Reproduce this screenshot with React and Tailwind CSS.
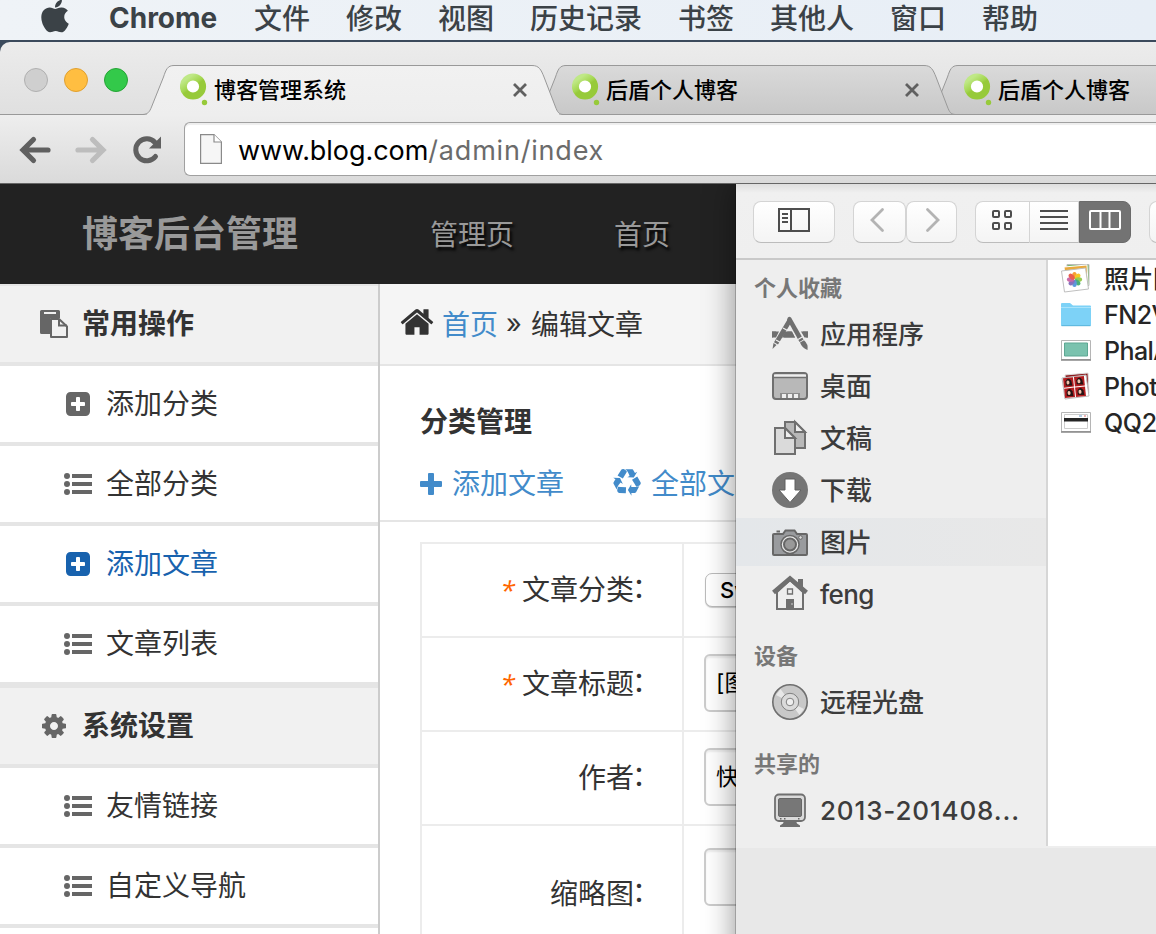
import React from "react";
import { FaApple } from "react-icons/fa";

const MENUS = ["文件", "修改", "视图", "历史记录", "书签", "其他人", "窗口", "帮助"];

function Favicon() {
  return (
    <svg width="28" height="34" viewBox="0 0 28 34" className="shrink-0">
      <defs>
        <linearGradient id="fav" x1="0" y1="0" x2="0.7" y2="1">
          <stop offset="0.15" stopColor="#bfe886" />
          <stop offset="0.5" stopColor="#a3d64f" />
          <stop offset="0.6" stopColor="#97ca3a" />
        </linearGradient>
      </defs>
      <circle cx="13" cy="13.5" r="9.6" fill="#fff" stroke="url(#fav)" strokeWidth="7" />
      <circle cx="24.5" cy="29.5" r="2.7" fill="#97ca3a" />
    </svg>
  );
}

function TabShape({ active }) {
  return (
    <svg width="420" height="51" viewBox="0 0 420 51" className="absolute -left-[3px] top-0">
      <defs>
        <linearGradient id="tabOn" x1="0" y1="0" x2="0" y2="1">
          <stop offset="0" stopColor="#f1f1f1" />
          <stop offset="1" stopColor="#eeeeee" />
        </linearGradient>
        <linearGradient id="tabOff" x1="0" y1="0" x2="0" y2="1">
          <stop offset="0" stopColor="#dadada" />
          <stop offset="1" stopColor="#c8c8c8" />
        </linearGradient>
      </defs>
      <path
        d="M0 49.500 C5 49 6.500 47 8.500 42 L20.500 12 C23 4.500 24.500 0.500 31 0.500 L389 0.500 C396 0.500 398 4.500 401 12 L412.500 42 C414.500 47 415.500 49 420 49.500"
        fill={active ? "url(#tabOn)" : "url(#tabOff)"}
        stroke="#999"
      />
      {active ? <path d="M4 49H416V51H4z" fill="#eeeeee" /> : <path d="M0 49.500H420" stroke="#999" />}
    </svg>
  );
}

function Tab({ title, active, z, closable = true }) {
  return (
    <div className={`relative h-[50px] w-[392px] shrink-0 ${z}`}>
      <TabShape active={active} />
      <div className="relative flex h-full items-center pl-[34px]">
        <Favicon />
        <span className="ml-[6px] w-[298px] text-[22px] font-medium leading-[32px] text-black">{title}</span>
        {closable && (
          <svg width="16" height="16" viewBox="0 0 16 16" className="shrink-0" stroke="#606060" strokeWidth="2.800">
            <path d="M2 2l12 12M14 2L2 14" />
          </svg>
        )}
      </div>
    </div>
  );
}

function ChromeTop() {
  return (
    <div className="flex h-[142px] shrink-0 flex-col rounded-tl-[10px] bg-gradient-to-b from-[#ececec] via-[#e0e0e0] via-50% to-[#dcdcdc]">
      <div className="flex h-[73px] items-end border-b border-[#999]">
        <div className="flex h-full w-[146px] shrink-0 gap-4 pl-6 pt-[26px]">
          <i className="h-6 w-6 rounded-full border border-[#b0b0b0] bg-[#cfcfcf]" />
          <i className="h-6 w-6 rounded-full border border-[#e0a030] bg-[#ffbe41]" />
          <i className="h-6 w-6 rounded-full border border-[#25a435] bg-[#33c94a]" />
        </div>
        <div className="-mb-px flex h-[50px]">
          <Tab title="博客管理系统" active z="z-30" />
          <Tab title="后盾个人博客" z="z-20" />
          <Tab title="后盾个人博客" z="z-10" closable={false} />
        </div>
      </div>
      <div className="flex h-[69px] items-center border-b border-[#666] bg-gradient-to-b from-[#eeeeee] to-[#dadada]">
        <svg width="184" height="60" viewBox="0 0 184 60" fill="none" strokeLinecap="round" className="shrink-0">
          <path d="M23.500 31H48M33.500 20.500L23 31l10.500 10.500" stroke="#606060" strokeWidth="5.200" />
          <path d="M78 31h24M92.500 20.500L103 31l-10.500 10.500" stroke="#bdbdbd" strokeWidth="5.200" />
          <path d="M155.500 37.500A11 11 0 1 1 155 23.500" stroke="#606060" strokeWidth="5" />
          <path d="M161 17.500V29.500H149z" fill="#606060" />
        </svg>
        <div className="flex h-[54px] flex-1 items-center rounded-l-[6px] border border-r-0 border-[#a0a0a0] bg-white pl-[15px] shadow-[inset_0_2px_1px_#eee]">
          <svg width="22" height="30" viewBox="0 0 22 30" fill="#f6f6f6" stroke="#8a8a8a" strokeWidth="1.200" className="shrink-0">
            <path d="M.6.6H14L21.400 8V29.400H.6z" />
            <path d="M14 .6V8H21.400" fill="#fff" />
          </svg>
          <span className="ml-4 whitespace-nowrap pt-[3px] text-[27px] leading-[36px] tracking-[-0.050px] text-black">
            www.blog.com<span className="tracking-[0.800px] text-[#6b6b6b]">/admin/index</span>
          </span>
        </div>
      </div>
    </div>
  );
}

function PasteIcon() {
  return (
    <svg width="28" height="28" viewBox="0 0 28 28" className="shrink-0">
      <path d="M1.500 0H18.500Q20 0 20 1.500V8H12Q10 8 10 10V24H1.500Q0 24 0 22.500V1.500Q0 0 1.500 0z" fill="#666" />
      <path d="M4 2H16V4H4z" fill="#f1f1f1" />
      <path d="M11 9H19L27 16.500V27H11z" fill="#f1f1f1" stroke="#666" strokeWidth="2" strokeLinejoin="round" />
      <path d="M19 9V15.500H27" fill="none" stroke="#666" strokeWidth="2" />
    </svg>
  );
}

function CogIcon() {
  return (
    <svg width="28" height="28" viewBox="0 0 1792 1792" fill="#666" className="shrink-0">
      <path d="M1152 896q0-106-75-181t-181-75-181 75-75 181 75 181 181 75 181-75 75-181zm512-109v222q0 12-8 23t-20 13l-185 28q-19 54-39 91 35 50 107 138 10 12 10 25t-9 23q-27 37-99 108t-94 71q-12 0-26-9l-138-108q-44 23-91 38-16 136-29 186-7 28-36 28h-222q-14 0-24.500-8.500t-11.500-21.500l-28-184q-49-16-90-37l-141 107q-10 9-25 9-14 0-25-11-126-114-165-168-7-10-7-23 0-12 8-23 15-21 51-66.500t54-70.500q-27-50-41-99l-183-27q-13-2-21-12.500t-8-23.500v-222q0-12 8-23t19-13l186-28q14-46 39-92-40-57-107-138-10-12-10-24 0-10 9-23 26-36 98.500-107.500t94.500-71.500q13 0 26 10l138 107q44-23 91-38 16-136 29-186 7-28 36-28h222q14 0 24.500 8.500t11.500 21.500l28 184q49 16 90 37l142-107q9-9 24-9 13 0 25 10 129 119 165 170 7 8 7 22 0 12-8 23-15 21-51 66.500t-54 70.500q26 50 41 98l183 28q13 2 21 12.500t8 23.500z" />
    </svg>
  );
}

function PlusSquare() {
  return (
    <svg width="28" height="28" viewBox="0 0 1792 1792" fill="currentColor" className="shrink-0">
      <path d="M1344 960v-128q0-26-19-45t-45-19h-256v-256q0-26-19-45t-45-19h-128q-26 0-45 19t-19 45v256h-256q-26 0-45 19t-19 45v128q0 26 19 45t45 19h256v256q0 26 19 45t45 19h128q26 0 45-19t19-45v-256h256q26 0 45-19t19-45zm320-544v960q0 119-84.500 203.500t-203.500 84.500h-960q-119 0-203.500-84.500t-84.500-203.500v-960q0-119 84.500-203.500t203.500-84.500h960q119 0 203.500 84.500t84.500 203.500z" />
    </svg>
  );
}

function ListIcon() {
  return (
    <svg width="28" height="28" viewBox="0 0 28 28" fill="currentColor" className="shrink-0">
      <circle cx="3" cy="6" r="3" />
      <circle cx="3" cy="14" r="3" />
      <circle cx="3" cy="22" r="3" />
      <path d="M8 4h20v4H8zM8 12h20v4H8zM8 20h20v4H8z" />
    </svg>
  );
}

function HomeIcon() {
  return (
    <svg width="36" height="36" viewBox="0 0 1792 1792" fill="#333" className="mb-[5px] shrink-0">
      <path d="M1472 992v480q0 26-19 45t-45 19h-384v-384h-256v384h-384q-26 0-45-19t-19-45v-480q0-1 .5-3t.5-3l575-474 575 474q1 2 1 6zm223-69l-62 74q-8 9-21 11h-3q-13 0-21-7l-692-577-692 577q-12 8-24 7-13-2-21-11l-62-74q-8-10-7-23.500t11-21.500l719-599q32-26 76-26t76 26l244 204v-195q0-14 9-23t23-9h192q14 0 23 9t9 23v408l219 182q10 8 11 21.500t-7 23.500z" />
    </svg>
  );
}

function RecycleIcon() {
  return (
    <svg width="28" height="28" viewBox="0 0 1792 1792" fill="currentColor" className="mb-[2px] ml-[49px] shrink-0">
      <path d="M836 1169l-15 368-2 22-420-29q-36-3-67-31.500t-47-65.500q-11-27-14.500-55t4-65 12-55 21.500-64 19-53q78 12 509 28zm-387-586l180 379-147-92q-63 72-111.500 144.500t-72.500 125-39.500 94.500-18.500 63l-4 21-190-357q-17-26-18-56t6-47l8-18q35-63 114-188l-140-86zm1231 517l-188 359q-12 29-36.500 46.500t-43.500 20.500l-18 4q-71 7-219 12l8 164-230-367 211-362 7 173q170 16 283 5t170-33zm-785-924q-47 63-265 435l-317-187-19-12 225-356q20-31 60-45t80-10q24 2 48.500 12t42 21 41.500 33 36 34.500 36 39.500 32 35zm655 307l212 363q18 37 12.500 76t-27.500 74q-13 20-33 37t-38 28-48.500 22-47 16-51.500 14-46 12q-34-72-265-436l313-195zm-143-226l142-83-220 373-419-20 151-86q-34-89-75-166t-75.500-123.500-64.500-80-47-46.500l-17-13 405 1q31-3 58 10.500t39 28.500l11 15q39 61 112 190z" />
    </svg>
  );
}

function SideHeader({ icon, children }) {
  return (
    <div className="flex h-[80px] shrink-0 items-center border-b-4 border-[#e5e5e5] bg-[#f1f1f1] pl-10 text-[28px] font-bold text-[#333]">
      {icon}
      <span className="ml-[14px]">{children}</span>
    </div>
  );
}

function SideItem({ plus, active, children }) {
  return (
    <div className="flex h-[80px] shrink-0 items-center border-b-4 border-[#e5e5e5] bg-white pl-16">
      <span className={active ? "text-[#1862ae]" : "text-[#666]"}>{plus ? <PlusSquare /> : <ListIcon />}</span>
      <span className={`ml-[14px] text-[28px] ${active ? "text-[#1862ae]" : "text-[#333]"}`}>{children}</span>
    </div>
  );
}

function FormRow({ label, required, height = "h-[94px]", fieldPad = "pt-4", children }) {
  return (
    <div className={`flex border-t-2 border-[#ececec] ${height}`}>
      <div className="flex w-[262px] shrink-0 items-center justify-end border-r-2 border-[#ececec] pr-[20px] text-[28px] text-[#333]">
        {required && (
          <span className="mr-[7px] inline-block -skew-x-12 font-['Open_Sans',sans-serif] text-[26px] text-[#ff6600]">*</span>
        )}
        <span className="whitespace-nowrap">
          {label}
          <span className="relative -left-[2px] -top-[2px]">：</span>
        </span>
      </div>
      <div className={`flex flex-1 items-start pl-5 ${fieldPad}`}>{children}</div>
    </div>
  );
}

function Field({ children }) {
  return (
    <div className="flex h-[58px] w-[500px] items-center rounded-[6px] border-2 border-[#ccc] bg-white pl-[10px] text-[23px] text-black shadow-[inset_0_2px_2px_#eee]">
      {children}
    </div>
  );
}

function BlogPage() {
  return (
    <div className="flex h-[750px] w-full flex-col overflow-hidden bg-white">
      <div className="flex h-[100px] shrink-0 items-center bg-[#222] pl-[82px] text-[#999]">
        <span className="w-[348px] text-[36px] font-bold">博客后台管理</span>
        <span className="w-[184px] pt-px text-[28px] [text-shadow:2px_3px_3px_#000]">管理页</span>
        <span className="pt-px text-[28px] [text-shadow:2px_3px_3px_#000]">首页</span>
      </div>
      <div className="flex h-[650px]">
        <div className="flex w-[380px] shrink-0 flex-col border-r-2 border-[#ccc]">
          <div className="h-[2px] shrink-0 bg-[#e5e5e5]" />
          <SideHeader icon={<PasteIcon />}>常用操作</SideHeader>
          <SideItem plus>添加分类</SideItem>
          <SideItem>全部分类</SideItem>
          <SideItem plus active>添加文章</SideItem>
          <SideItem>文章列表</SideItem>
          <div className="h-[2px] shrink-0 bg-[#e5e5e5]" />
          <SideHeader icon={<CogIcon />}>系统设置</SideHeader>
          <SideItem>友情链接</SideItem>
          <SideItem>自定义导航</SideItem>
        </div>
        <div className="flex flex-1 flex-col">
          <div className="flex h-[82px] shrink-0 items-center border-b-2 border-[#e5e5e5] bg-[#f5f5f5] pl-[19px] text-[28px] text-[#333]">
            <HomeIcon />
            <span className="ml-[7px] pt-px text-[#428bca]">首页</span>
            <span className="ml-[8px] w-[25px] pt-px text-[27px]">»</span>
            <span className="pt-px">编辑文章</span>
          </div>
          <div className="flex h-[156px] shrink-0 flex-col border-b-2 border-[#e5e5e5] pl-10 pt-[35px]">
            <span className="text-[28px] font-bold leading-[42px] text-[#333]">分类管理</span>
            <div className="mt-[20px] flex items-center whitespace-nowrap text-[28px] leading-[42px] text-[#428bca]">
              <svg width="22" height="22" viewBox="0 0 22 22" fill="currentColor">
                <path d="M9 0h4q1 0 1 1v7h7q1 0 1 1v4q0 1-1 1h-7v7q0 1-1 1H9q-1 0-1-1v-7H1q-1 0-1-1V9q0-1 1-1h7V1q0-1 1-1z" />
              </svg>
              <span className="ml-[10px]">添加文章</span>
              <RecycleIcon />
              <span className="ml-[10px]">全部文章</span>
            </div>
          </div>
          <div className="ml-10 mt-5 border-l-2 border-[#ececec]">
            <FormRow label="文章分类" required fieldPad="pt-[29px]">
              <div className="ml-px flex h-[34px] w-[200px] items-center rounded-[7px] border border-[#bbb] bg-white pl-[14px] text-[22px] font-medium text-black shadow-[0_1px_1px_#ccc]">
                Sw
              </div>
            </FormRow>
            <FormRow label="文章标题" required>
              <Field>[图</Field>
            </FormRow>
            <FormRow label="作者">
              <Field>快</Field>
            </FormRow>
            <FormRow label="缩略图" height="h-[138px]" fieldPad="pt-[22px]">
              <Field />
            </FormRow>
          </div>
        </div>
      </div>
    </div>
  );
}

const I = "h-10 w-10 shrink-0";
const finderIcons = {
  apps: (
    <svg viewBox="0 0 40 40" className={I} fill="#6f6f6f">
      <path d="M2 17.500h36v6H2z" />
      <path d="M19.500 3L5 30 M20 4L34 30" stroke="#eee" strokeWidth="10" />
      <path d="M2.500 35l1-6 3 2zM21.500 8L8 30.500 4 28.200 17.500 5.500z" />
      <path d="M17 5.500Q18 1.500 21 3.500L33.500 25.500 29.500 28z" />
      <path d="M30 28.500l4-2.300Q38.500 30 37.500 36 32 34 30 28.500z" />
      <path d="M2 17.500h7l-3 6H2zM31 17.500h7v6h-3.500z" />
      <path d="M13 14l4.500 2.500M28 25.500l5-3M6 26l4.500 2.500" stroke="#eee" strokeWidth="1.300" />
      <path d="M15 17.500h7l3 6H12z" />
    </svg>
  ),
  desktop: (
    <svg viewBox="0 0 40 40" className={I}>
      <rect x="3" y="7" width="34" height="26" rx="3" fill="#b8b8b8" stroke="#6f6f6f" strokeWidth="2" />
      <path d="M4 8.500h32v2.500H4z" fill="#eee" />
      <path d="M3 11.500h34" stroke="#6f6f6f" strokeWidth="1.500" />
      <path d="M10 27h20v5H10z" fill="#8c8c8c" />
      <path d="M12 28h4v4h-4zM18 28h4v4h-4zM24 28h4v4h-4z" fill="#eee" />
    </svg>
  ),
  docs: (
    <svg viewBox="0 0 40 40" className={I} stroke="#6f6f6f" strokeWidth="2">
      <path d="M15 4H25L35 14V30H15z" fill="#b8b8b8" />
      <path d="M25 4V14H35z" fill="#eee" />
      <path d="M5 10H15L25 20V36H5z" fill="#dadada" />
      <path d="M15 10V20H25z" fill="#eee" />
    </svg>
  ),
  downloads: (
    <svg viewBox="0 0 40 40" className={I}>
      <circle cx="20" cy="20" r="18" fill="#757575" />
      <path d="M15 9h10v11H31L20 32.500 9 20h6z" fill="#fff" stroke="#606060" strokeWidth="1" />
    </svg>
  ),
  pictures: (
    <svg viewBox="0 0 40 40" className={I}>
      <path d="M4 9h9l2.500-3.500h9L27 9h9q1 0 1 1v19q0 1-1 1H4q-1 0-1-1V10q0-1 1-1z" transform="translate(0 3)" fill="#999b9e" stroke="#676767" strokeWidth="2" />
      <path d="M6.500 9.500h3.500" stroke="#676767" strokeWidth="2" />
      <circle cx="20" cy="22.500" r="9" fill="#e8e8e8" stroke="#676767" strokeWidth="1.500" />
      <circle cx="20" cy="22.500" r="6" fill="#999" stroke="#676767" strokeWidth="2" />
      <circle cx="30.500" cy="15.500" r="1.800" fill="#ddd" stroke="#676767" />
    </svg>
  ),
  home: (
    <svg viewBox="0 0 40 40" className={I}>
      <path d="M7 18V35H33V18L20 6z" fill="#eee" stroke="#6f6f6f" strokeWidth="2" />
      <path d="M28 5h5v11l-5-4z" fill="#6f6f6f" />
      <path d="M3.500 18.500L20 4.500l16.500 14" fill="none" stroke="#6f6f6f" strokeWidth="4.500" />
      <path d="M16 25h8v11h-8z" fill="#6f6f6f" />
      <path d="M17.500 15h5v5h-5z" fill="#eee" stroke="#6f6f6f" strokeWidth="1.300" />
      <path d="M22 29v2" stroke="#ccc" />
    </svg>
  ),
  disc: (
    <svg viewBox="0 0 40 40" className={I}>
      <circle cx="20" cy="20" r="17.200" fill="#c8c8c8" stroke="#6f6f6f" strokeWidth="1.600" />
      <path d="M20 20L6 13 10.500 7zM20 20l14 7-4.500 6z" fill="#e8e8e8" />
      <circle cx="20" cy="20" r="8.700" fill="#dadada" stroke="#808080" />
      <circle cx="20" cy="20" r="3.800" fill="#eee" stroke="#808080" />
    </svg>
  ),
  pc: (
    <svg viewBox="0 0 40 40" className={I}>
      <path d="M14 31h12l1 2.500 3 2v1.500H10v-1.500l3-2z" fill="#6f6f6f" />
      <rect x="5" y="4.500" width="30" height="26.500" rx="4" fill="#dadada" stroke="#6f6f6f" strokeWidth="1.800" />
      <rect x="8.500" y="8.500" width="23" height="18" rx="1.500" fill="#777" stroke="#666" />
      <path d="M10 28.700h1.500M14 28.700h1.500M28 28.700h1.500" stroke="#666" strokeWidth="1.500" />
    </svg>
  ),
};

function FinderItem({ icon, selected, track = "", children }) {
  return (
    <div
      className={`mb-1 flex h-12 shrink-0 items-center pl-[34px] text-[26px] font-medium text-[#3c3c3c] ${
        selected ? "bg-gradient-to-r from-[#e4e7ea] to-[#e8e8e8]" : ""
      }`}
    >
      {finderIcons[icon]}
      <span className={`ml-[10px] whitespace-nowrap ${track}`}>{children}</span>
    </div>
  );
}

function FinderHead({ children, className }) {
  return <div className={`shrink-0 pl-[18px] text-[22px] font-bold leading-[32px] text-[#777] ${className}`}>{children}</div>;
}

const BTN = "flex h-[42px] items-center justify-center border border-[#d4d4d4] border-b-[#bcbcbc] bg-gradient-to-b from-white to-[#f4f4f4] pb-1";
const petals = ["#f7941d", "#f4c20d", "#8dc63f", "#39a86b", "#4a90d9", "#7b62b5", "#c45aa0", "#e84c3d"];

const files = [
  {
    name: "照片图",
    size: "text-[25px] tracking-[-0.500px]",
    icon: (
      <>
        <path d="M7 1.500h22v21H7z" fill="#7cb96a" stroke="#bbb" />
        <path d="M4 4l23-2 1 20-22 2z" fill="#e9a93c" stroke="#fff" />
        <path d="M1.500 8l24-3 3 21-24 3z" fill="#fff" stroke="#c0c0c0" />
        <g transform="translate(14.500 16.500)" opacity=".9">
          {petals.map((c, i) => (
            <ellipse key={c} cx="0" cy="-4" rx="2.300" ry="3.600" fill={c} transform={`rotate(${i * 45})`} />
          ))}
        </g>
      </>
    ),
  },
  {
    name: "FN2V",
    size: "text-[25px] tracking-[-0.500px]",
    icon: (
      <>
        <path d="M1 5q0-1 1-1h8l3 2.500h17q1 0 1 1V26q0 1-1 1H2q-1 0-1-1z" fill="#7dd2f7" />
        <path d="M1 8.500h30" stroke="#a9e3fb" />
        <path d="M1.500 26.700h29" stroke="#5bb4da" />
      </>
    ),
  },
  {
    name: "PhalA",
    size: "text-[25px] tracking-[-0.600px]",
    icon: (
      <>
        <path d="M1.500 5.500h29v19h-29z" fill="#fff" stroke="#b5b5b5" />
        <path d="M1 25h30" stroke="#888" strokeWidth="1.500" />
        <path d="M4.500 8h23v13h-23z" fill="#7ac2ae" stroke="#5da793" />
      </>
    ),
  },
  {
    name: "Phot",
    size: "text-[25px] tracking-[-0.300px]",
    icon: (
      <>
        <path d="M5 4l23-2 1 20-22 3z" fill="#8f1a1c" stroke="#ddd" />
        <path d="M2 7l24-3 3 21-24 3z" fill="#fff" stroke="#bbb" />
        <g transform="rotate(-6 15 16)">
          {[4, 15].map((x) =>
            [6, 16.5].map((y) => (
              <g key={`${x}-${y}`}>
                <rect x={x} y={y} width="10" height="9.500" fill="#b31d20" />
                <path d={`M${x + 2} ${y + 7.5}V${y + 3.5}q3-5 6 0l.5 5z`} fill="#231314" />
                <ellipse cx={x + 4.5} cy={y + 4.8} rx="1.500" ry="2" fill="#efc1aa" />
              </g>
            ))
          )}
        </g>
      </>
    ),
  },
  {
    name: "QQ2",
    size: "text-[25px] tracking-[-0.400px]",
    icon: (
      <>
        <path d="M1.500 5.500h29v19h-29z" fill="#fff" stroke="#b5b5b5" />
        <path d="M1 25h30" stroke="#888" strokeWidth="1.500" />
        <path d="M4.500 7.500h23v14h-23z" fill="#fff" stroke="#ccc" />
        <path d="M4 11h24v3.500H4z" fill="#242424" />
        <path d="M24 9h2" stroke="#d66" />
        <path d="M19 9h3" stroke="#69c" />
      </>
    ),
  },
];

function FinderWindow() {
  return (
    <div className="flex h-[800px] w-[420px] flex-col bg-[#e8e8e8] shadow-[-2px_0_28px_rgba(0,0,0,0.4),-1px_0_0_rgba(0,0,0,0.2)]">
      <div className="flex h-[76px] shrink-0 border-b-2 border-[#c9c9c9] bg-gradient-to-b from-[#dedede] via-[#f0f0f0] via-[12%] to-[#efefef] pl-[17px] pt-[17px]">
        <div className={`${BTN} w-[82px] shrink-0 rounded-[8px]`}>
          <svg width="32" height="24" viewBox="0 0 32 24" fill="none" stroke="#4d4d4d" strokeWidth="2">
            <path d="M1 1h30v22H1zM13 1v22M4 6h6M4 10h6M4 14h6" />
          </svg>
        </div>
        <div className="ml-[18px] flex shrink-0">
          <div className={`${BTN} w-[53px] rounded-[8px] pr-[6px]`}>
            <svg width="16" height="26" viewBox="0 0 16 26" fill="none" stroke="#b3b3b3" strokeWidth="2.800" strokeLinecap="round">
              <path d="M13.500 2.500L3 13l10.500 10.500" />
            </svg>
          </div>
          <div className={`${BTN} w-[51px] rounded-[8px] pl-[3px]`}>
            <svg width="16" height="26" viewBox="0 0 16 26" fill="none" stroke="#b3b3b3" strokeWidth="2.800" strokeLinecap="round">
              <path d="M2.500 2.500L13 13 2.500 23.500" />
            </svg>
          </div>
        </div>
        <div className="ml-[18px] flex shrink-0">
          <div className={`${BTN} w-[55px] rounded-l-[8px] pr-[2px]`}>
            <svg width="20" height="20" viewBox="0 0 20 20" fill="none" stroke="#4d4d4d" strokeWidth="2">
              <rect x="1" y="1" width="6" height="6" rx="1" />
              <rect x="13" y="1" width="6" height="6" rx="1" />
              <rect x="1" y="13" width="6" height="6" rx="1" />
              <rect x="13" y="13" width="6" height="6" rx="1" />
            </svg>
          </div>
          <div className={`${BTN} w-[49px] border-l-0`}>
            <svg width="28" height="20" viewBox="0 0 28 20" stroke="#4d4d4d" strokeWidth="2">
              <path d="M0 1h28M0 7h28M0 13h28M0 19h28" />
            </svg>
          </div>
          <div className="flex h-[42px] w-[52px] items-center justify-center rounded-r-[8px] border border-[#6b6b6b] bg-[#737373] pb-1">
            <svg width="32" height="20" viewBox="0 0 32 20" fill="none" stroke="#fff" strokeWidth="2">
              <rect x="1" y="1" width="30" height="18" rx="1" />
              <path d="M11.500 1v18M20.500 1v18" />
            </svg>
          </div>
        </div>
        <div className={`${BTN} ml-[18px] w-[82px] shrink-0 rounded-[8px]`} />
      </div>
      <div className="flex h-[588px] shrink-0 border-b-2 border-[#eee]">
        <div className="flex w-[312px] shrink-0 flex-col border-r-2 border-[#d6d6d6] bg-[#eee]">
          <FinderHead className="mt-[12px] mb-[6px]">个人收藏</FinderHead>
          <FinderItem icon="apps">应用程序</FinderItem>
          <FinderItem icon="desktop">桌面</FinderItem>
          <FinderItem icon="docs">文稿</FinderItem>
          <FinderItem icon="downloads">下载</FinderItem>
          <FinderItem icon="pictures" selected>图片</FinderItem>
          <FinderItem icon="home" track="tracking-[-0.600px]">feng</FinderItem>
          <FinderHead className="mt-[18px] mb-[6px]">设备</FinderHead>
          <FinderItem icon="disc">远程光盘</FinderItem>
          <FinderHead className="mt-[18px] mb-[6px]">共享的</FinderHead>
          <FinderItem icon="pc" track="tracking-[0.850px]">2013-201408...</FinderItem>
        </div>
        <div className="flex flex-1 flex-col overflow-hidden bg-white pt-[1px]">
          {files.map((f) => (
            <div key={f.name} className="flex h-9 shrink-0 items-center whitespace-nowrap pl-3 font-medium text-[#262626]">
              <svg width="32" height="32" viewBox="0 0 32 32" className="shrink-0">{f.icon}</svg>
              <span className={`ml-3 pt-[2px] ${f.size}`}>{f.name}</span>
            </div>
          ))}
        </div>
      </div>
    </div>
  );
}

export default function App() {
  return (
    <div className="relative flex h-[934px] w-[1156px] flex-col overflow-hidden bg-[#3b4a5c] font-['Inter','Noto_Sans_CJK_SC',sans-serif]">
      <div className="mb-[2px] flex h-10 shrink-0 bg-gradient-to-r from-[#eff3f7] to-[#e7eef6] pl-[41px] text-[28px] leading-[36px] text-[#3b4247]">
        <FaApple className="-mt-[3px] h-[38px] w-[28px] shrink-0" />
        <span className="ml-[40px] w-[145px] shrink-0 font-bold">Chrome</span>
        <div className="flex gap-9 whitespace-nowrap pt-px font-medium">
          {MENUS.map((m) => (
            <span key={m}>{m}</span>
          ))}
        </div>
      </div>
      <ChromeTop />
      <BlogPage />
      <div className="absolute left-[736px] top-[184px] h-[750px] w-[420px] [clip-path:inset(0_0_0_-60px)]">
        <FinderWindow />
      </div>
    </div>
  );
}
